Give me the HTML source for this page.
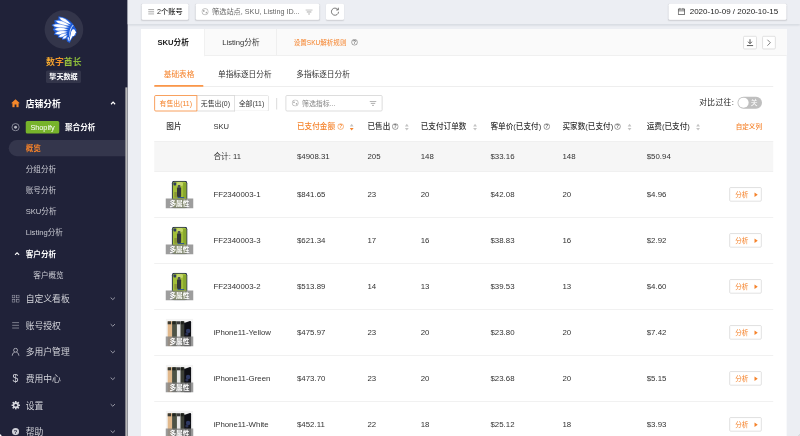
<!DOCTYPE html>
<html lang="zh-CN"><head><meta charset="utf-8"><title>SKU分析</title>
<style>
html,body{margin:0;padding:0}
body{width:800px;height:436px;overflow:hidden;background:#eceef3;font-family:"Liberation Sans","Noto Sans CJK SC",sans-serif;color:#333;-webkit-font-smoothing:antialiased}
#app{position:absolute;left:0;top:0;width:6400px;height:3488px;overflow:hidden;background:#eceef3;transform:scale(0.125);transform-origin:0 0;}
.abs{position:absolute}
/* sidebar */
#side{position:absolute;left:0;top:0;width:1020.8px;height:3488px;background:#202239;overflow:hidden}
#side .thumbbar{z-index:5;position:absolute;left:1003.2px;top:699.2px;width:18.4px;height:2792px;background:#b9b9b9}
#side .logo{position:absolute;left:356.8px;top:81.6px;width:308.8px;height:308.8px;border-radius:50%;background:#33354a}
#side .brand{position:absolute;left:0;width:1020.8px;top:444px;text-align:center;font-size:71.2px;line-height:96px;font-weight:700;letter-spacing:0}
#side .brand .bg{display:inline-block;color:#f08d29;background:linear-gradient(90deg,#f4ad2f 0%,#ef8a28 50%,#9fc83d 50%,#82b539 100%);-webkit-background-clip:text;background-clip:text;-webkit-text-fill-color:transparent}
#side .tag{position:absolute;left:368px;top:563.2px;width:280px;height:100.8px;border-radius:12px;background:#33354a;color:#fff;font-size:56.8px;line-height:100.8px;text-align:center;font-weight:700}
.mi{position:absolute;left:0;width:1000px;height:112px;line-height:112px;color:#d3d4da;font-size:70.4px;white-space:nowrap}
.mi .t{position:absolute;left:205.6px;top:4px}
.mi svg{position:absolute}
.mi.b{font-weight:700;color:#fff}
.si{position:absolute;left:205.6px;height:96px;line-height:96px;padding-top:2.4px;font-size:60.8px;color:#c9cad2;white-space:nowrap}
.pill{position:absolute;left:70px;top:1120px;width:933.6px;height:130.4px;border-radius:66px 0 0 66px;background:#34364c}
.shop{position:absolute;left:206px;top:968px;width:268px;height:100px;border-radius:12.8px;background:#77b32b;color:#fff;font-size:59.2px;line-height:100px;text-align:center;letter-spacing:-0.8px}
/* top bar */
#topbar{position:absolute;left:1020.8px;top:0;width:5379.2px;height:194.4px;background:#eceef3;box-shadow:0 8px 16px rgba(120,125,140,.28)}
.box{position:absolute;background:#fff;border-radius:12px;box-shadow:0 4px 10.4px rgba(0,0,0,.13);font-size:57.6px;line-height:125.6px;color:#333;white-space:nowrap}
/* panel */
#panel{position:absolute;left:1128px;top:232px;width:5164.8px;height:3360px;background:#fff}
#tabhead{position:absolute;left:0;top:0;width:5164.8px;height:212.8px;background:#fafafa;border-bottom:5.6px solid #e8e8e8;box-sizing:border-box}
.tab1{position:absolute;left:0;top:0;width:512px;height:217.6px;background:#fff;border-right:5.6px solid #e8e8e8;box-sizing:border-box}
.tab2{position:absolute;left:512px;top:0;width:576px;height:208px;border-right:5.6px solid #e8e8e8;box-sizing:border-box}
.tt{position:absolute;font-size:61.2px;line-height:96px;padding-top:0.8px;white-space:nowrap;color:#333}
.or{color:#f5822a !important}
.ibtn{position:absolute;width:107.2px;height:105.6px;border:5.6px solid #cfcfcf;border-radius:10.4px;background:#fff;box-sizing:border-box}
.rg{position:absolute;top:760.8px;height:130.4px;box-sizing:border-box;border:6.4px solid #d2d2d2;background:#fff;font-size:55.2px;line-height:121.6px;text-align:center;color:#333;white-space:nowrap}
/* table */
.hd{position:absolute;top:964px;font-size:60.8px;line-height:96px;color:#333;white-space:nowrap}
.hd svg{vertical-align:-8px}
.sumrow{position:absolute;left:1234px;top:1128.8px;width:4952px;height:244.8px;background:#f6f6f6;border-top:4.8px solid #e9e9e9;border-bottom:4.8px solid #e9e9e9;box-sizing:border-box}
.tbl{position:absolute;left:0;top:0;width:6400px;height:3488px;pointer-events:none}
.row{position:absolute;left:1234px;width:4952px;height:368px;border-bottom:5.6px solid #e8e8e8;box-sizing:border-box}
.c{position:absolute;top:131.2px;font-size:62.8px;line-height:96px;color:#333;white-space:nowrap}
.th{position:absolute;left:89.6px;top:70.8px;width:224px;height:224px;overflow:hidden}
.th .art{position:absolute;left:0;top:0}
.th .band{position:absolute;left:0;bottom:0;width:224px;height:80px;background:rgba(130,130,130,.78);color:#fff;font-size:53.6px;line-height:83.2px;text-align:center;font-weight:700}
.btn{position:absolute;left:4600.8px;top:125.2px;width:258.4px;height:113.6px;border:5.6px solid #cfcfcf;border-radius:10.4px;box-sizing:border-box;background:#fff}
.btn .bt{position:absolute;left:41.6px;top:6.4px;font-size:52.8px;line-height:100.8px;color:#f5822a}
.btn .tri{position:absolute;left:196px;top:36px;width:0;height:0;border-left:26.4px solid #f5822a;border-top:18.4px solid transparent;border-bottom:18.4px solid transparent}

.hw{font-weight:500}

</style></head>
<body>
<div id="app">
<div id="side">
<div class="logo"></div>
<svg class="abs" style="left:400px;top:112px" width="232" height="240" viewBox="0 0 29 30">
<path d="M8.4 2.2 L14 3.4 Q21.6 6.4 24.4 12.4 L26.4 15.6 L26.2 17.4 L27 19 L25.8 20 L25.8 21.8 L23.6 22.6 L21.4 25.6 L19.8 29 L17 27.6 L16.4 25 L12 26 L12.2 24 L7.6 23.6 L8.4 21.6 L3.8 20.8 L5 18.2 L2.8 15.6 L4.2 13.6 L1.4 11 L5 9.4 L4 6.4 L8.4 5.6 Z" fill="#1d5bd8"/>
<path d="M21.40 10.60 Q15.06 2.62 9.00 3.20 Q11.37 8.81 21.40 10.60Z" fill="#fff" stroke="#2a66dc" stroke-width=".4"/>
<path d="M20.20 11.80 Q11.65 4.90 5.40 6.80 Q9.22 12.10 20.20 11.80Z" fill="#fff" stroke="#2a66dc" stroke-width=".4"/>
<path d="M19.20 13.40 Q8.80 7.96 2.60 11.00 Q7.69 15.68 19.20 13.40Z" fill="#fff" stroke="#2a66dc" stroke-width=".4"/>
<path d="M18.40 15.40 Q9.08 11.47 4.20 15.20 Q8.97 19.07 18.40 15.40Z" fill="#fff" stroke="#2a66dc" stroke-width=".4"/>
<path d="M17.80 17.40 Q8.60 15.20 4.80 19.60 Q9.84 22.50 17.80 17.40Z" fill="#fff" stroke="#2a66dc" stroke-width=".4"/>
<path d="M17.40 19.20 Q10.38 18.61 8.60 22.80 Q12.80 24.54 17.40 19.20Z" fill="#fff" stroke="#2a66dc" stroke-width=".4"/>
<path d="M17.60 21.00 Q12.68 21.61 12.60 25.00 Q15.92 25.67 17.60 21.00Z" fill="#fff" stroke="#2a66dc" stroke-width=".4"/>
<path d="M22.2 10 Q17.4 15 18.6 23.6" fill="none" stroke="#1d5bd8" stroke-width="1.5"/>
<path d="M23.2 11 Q19 15.6 20 23" fill="none" stroke="#fff" stroke-width=".8"/>
<path d="M24.2 12.2 Q20.4 16 21.2 22.6" fill="none" stroke="#1d5bd8" stroke-width=".9"/>
<path d="M22.4 15.4 Q24.6 14.8 25 16.6 L26.2 18.6 L25.2 19.2 L25.4 20.6 L24.4 20.8 L24.2 22 L22.4 22.2 L21 25 L19.4 27.8 Q19.6 23.6 20.8 20.4 Q21 17 22.4 15.4Z" fill="#fff"/>
<path d="M17.4 23.4 L19.2 23.2 L18.4 27.6 Z" fill="#e6edfc"/>
</svg>
<div class="brand"><span class="bg">数字酋长</span></div>
<div class="tag">擎天数据</div>
<div class="thumbbar"></div>

<!-- 店铺分析 -->
<div class="mi b" style="top:771.2px">
<svg style="left:88px;top:20.8px" width="72" height="68.8" viewBox="0 0 18 17"><path d="M9 0.5 L0.3 8.6 H2.8 V16.6 H7.2 V11 H10.8 V16.6 H15.2 V8.6 H17.7 Z" fill="#f5882a"/></svg>
<span class="t">店铺分析</span>
<svg style="left:883.2px;top:36.8px" width="43.2" height="32" viewBox="0 0 11 8"><path d="M1.2 6.6 L5.5 2.2 L9.8 6.6" fill="none" stroke="#fff" stroke-width="2.5"/></svg>
</div>
<!-- Shopify row -->
<svg class="abs" style="left:90.4px;top:983.2px" width="68.8" height="68.8" viewBox="0 0 16 16"><circle cx="8" cy="8" r="6.8" fill="none" stroke="#b4b5c0" stroke-width="1.25"/><circle cx="8" cy="8" r="2.7" fill="#b4b5c0"/></svg>
<div class="shop">Shopify</div>
<div class="si" style="left:520px;top:969.6px;color:#fff;font-weight:700">聚合分析</div>
<div class="pill"></div>
<div class="si" style="top:1136px;color:#f5822a;font-weight:700">概览</div>
<div class="si" style="top:1308px">分组分析</div>
<div class="si" style="top:1474.4px">账号分析</div>
<div class="si" style="top:1641.6px">SKU分析</div>
<div class="si" style="top:1811.2px">Listing分析</div>
<svg class="abs" style="left:115.2px;top:2014.4px" width="43.2" height="32" viewBox="0 0 11 8"><path d="M1.2 6.4 L5.5 2 L9.8 6.4" fill="none" stroke="#fff" stroke-width="2.2"/></svg>
<div class="si" style="top:1982.4px;color:#fff;font-weight:700">客户分析</div>
<div class="si" style="left:266.4px;top:2150.4px">客户概览</div>

<div class="mi" style="top:2332.8px">
<svg style="left:92.8px;top:24px" width="64" height="64" viewBox="0 0 16 16" fill="none" stroke="#a9aab6" stroke-width="1.2"><rect x="1" y="1" width="5.4" height="5.4"/><rect x="9.6" y="1" width="5.4" height="5.4"/><rect x="1" y="9.6" width="5.4" height="5.4"/><rect x="9.6" y="9.6" width="5.4" height="5.4"/></svg>
<span class="t">自定义看板</span>
<svg style="left:880px;top:40px" width="44.8" height="32" viewBox="0 0 11 8"><path d="M1.2 1.8 L5.5 6 L9.8 1.8" fill="none" stroke="#a9aab6" stroke-width="1.8"/></svg>
</div>
<div class="mi" style="top:2545.6px">
<svg style="left:92.8px;top:27.2px" width="64" height="59.2" viewBox="0 0 16 15" fill="none" stroke="#a3a4b0" stroke-width="1.4"><path d="M1 2 H15 M1 7.5 H15 M1 13 H15"/></svg>
<span class="t">账号授权</span>
<svg style="left:880px;top:40px" width="44.8" height="32" viewBox="0 0 11 8"><path d="M1.2 1.8 L5.5 6 L9.8 1.8" fill="none" stroke="#a9aab6" stroke-width="1.8"/></svg>
</div>
<div class="mi" style="top:2759.2px">
<svg style="left:91.2px;top:20.8px" width="67.2" height="70.4" viewBox="0 0 17 18" fill="none" stroke="#d0d1d8" stroke-width="1.5"><circle cx="8.5" cy="5.6" r="4"/><path d="M1.4 17 Q2 10.6 6.6 9.6 M15.6 17 Q15 10.6 10.4 9.6"/></svg>
<span class="t">多用户管理</span>
<svg style="left:880px;top:40px" width="44.8" height="32" viewBox="0 0 11 8"><path d="M1.2 1.8 L5.5 6 L9.8 1.8" fill="none" stroke="#a9aab6" stroke-width="1.8"/></svg>
</div>
<div class="mi" style="top:2972.8px">
<span style="position:absolute;left:100.8px;top:0;font-size:83.2px;color:#d0d1d8">$</span>
<span class="t">费用中心</span>
<svg style="left:880px;top:40px" width="44.8" height="32" viewBox="0 0 11 8"><path d="M1.2 1.8 L5.5 6 L9.8 1.8" fill="none" stroke="#a9aab6" stroke-width="1.8"/></svg>
</div>
<div class="mi" style="top:3185.6px">
<svg style="left:89.6px;top:20.8px" width="72" height="72" viewBox="0 0 18 18"><g fill="#d6d7de"><circle cx="9" cy="9" r="5.8"/><g><rect x="7.4" y="0.4" width="3.2" height="17.2" rx=".6"/><rect x="7.4" y="0.4" width="3.2" height="17.2" rx=".6" transform="rotate(45 9 9)"/><rect x="7.4" y="0.4" width="3.2" height="17.2" rx=".6" transform="rotate(90 9 9)"/><rect x="7.4" y="0.4" width="3.2" height="17.2" rx=".6" transform="rotate(135 9 9)"/></g></g><circle cx="9" cy="9" r="2.7" fill="#202239"/></svg>
<span class="t">设置</span>
<svg style="left:880px;top:40px" width="44.8" height="32" viewBox="0 0 11 8"><path d="M1.2 1.8 L5.5 6 L9.8 1.8" fill="none" stroke="#a9aab6" stroke-width="1.8"/></svg>
</div>
<div class="mi" style="top:3396.8px">
<svg style="left:93.6px;top:25.6px" width="60.8" height="60.8" viewBox="0 0 17 17"><circle cx="8.5" cy="8.5" r="8" fill="#cfd0d8"/><text x="8.5" y="13" font-size="12.5" font-weight="700" text-anchor="middle" fill="#202239" font-family="Liberation Sans, sans-serif">?</text></svg>
<span class="t">帮助</span>
<svg style="left:880px;top:40px" width="44.8" height="32" viewBox="0 0 11 8"><path d="M1.2 1.8 L5.5 6 L9.8 1.8" fill="none" stroke="#a9aab6" stroke-width="1.8"/></svg>
</div>
<div class="abs" style="left:0;top:3474.4px;width:12px;height:13.6px;background:#fff;border-top-right-radius:12px"></div>
</div>
<div id="topbar"></div>
<!-- top buttons -->
<div class="box" style="left:1134.4px;top:29.6px;width:372.8px;height:127.2px">
<svg class="abs" style="left:50.4px;top:42.4px" width="49.6" height="44.8" viewBox="0 0 12 11"><path d="M0 1.2 H12 M0 5.5 H12 M0 9.8 H12" stroke="#999" stroke-width="1.7" fill="none"/></svg>
<span class="abs" style="left:121.6px;top:0;font-weight:500;color:#2b2b2b">2个账号</span></div>
<div class="box" style="left:1566.4px;top:29.6px;width:987.2px;height:127.2px">
<svg class="abs" style="left:44.8px;top:34.4px" width="59.2" height="59.2" viewBox="0 0 14 14"><circle cx="7" cy="7" r="6" fill="none" stroke="#a6a6a6" stroke-width="1.3"/><path d="M3 4.4 Q6 3 6.4 6 Q4.8 8.2 3.2 6.8 Z M8.4 7.4 Q11.4 6.6 10.8 9.6 Q9 11.2 8 9.4 Z" fill="#a6a6a6"/></svg>
<span class="abs" style="left:129.6px;top:0;color:#666;font-size:57.6px">筛选站点, SKU, Listing ID...</span>
<svg class="abs" style="left:876.8px;top:45.6px" width="59.2" height="41.6" viewBox="0 0 14 10"><path d="M0 1 H14 M2.6 5 H11.4 M5.2 9 H8.8" stroke="#929292" stroke-width="1.5" fill="none"/></svg>
</div>
<div class="box" style="left:2608px;top:29.6px;width:144px;height:127.2px">
<svg class="abs" style="left:35.2px;top:25.6px" width="73.6" height="73.6" viewBox="0 0 18 18"><path d="M14.6 5.2 A7 7 0 1 0 16 9.6" fill="none" stroke="#555" stroke-width="1.5"/><path d="M15.6 1.6 V6 H11.2" fill="none" stroke="#555" stroke-width="1.5"/></svg>
</div>
<div class="box" style="left:5348.8px;top:29.6px;width:942.4px;height:127.2px">
<svg class="abs" style="left:73.6px;top:30.4px" width="59.2" height="60.8" viewBox="0 0 15 15"><rect x="1" y="3" width="13" height="11" fill="none" stroke="#444" stroke-width="1.4"/><path d="M1 6.6 H14 M4.4 0.6 V4 M10.6 0.6 V4" stroke="#444" stroke-width="1.4" fill="none"/></svg>
<span class="abs" style="left:168.8px;top:0;font-size:64px;color:#222">2020-10-09 / 2020-10-15</span>
</div>

<div id="panel">
<div id="tabhead"></div>
<div class="tab1"></div><div class="tab2"></div>
<div class="tt" style="left:131.2px;top:59.2px;font-weight:700;color:#222">SKU分析</div>
<div class="tt" style="left:649.6px;top:59.2px">Listing分析</div>
<div class="tt or" style="left:1221.6px;top:60.8px;font-size:52.4px">设置SKU解析规则</div>
<svg class="abs" style="left:1680.8px;top:79.2px" width="54.4" height="54.4" viewBox="0 0 12 12"><circle cx="6" cy="6" r="5.1" fill="none" stroke="#666" stroke-width="1.05"/><text x="6" y="9.1" font-size="8.4" font-weight="700" text-anchor="middle" fill="#666" font-family="Liberation Sans, sans-serif">?</text></svg>
<div class="ibtn" style="left:4818.4px;top:56px"><svg class="abs" style="left:20.8px;top:17.6px" width="56" height="60.8" viewBox="0 0 14 15"><path d="M7 0.6 V9 M3.2 5.6 L7 9.6 L10.8 5.6 M0.6 13.4 H13.4" fill="none" stroke="#555" stroke-width="2"/></svg></div>
<div class="ibtn" style="left:4969.6px;top:56px"><svg class="abs" style="left:28.8px;top:19.2px" width="40" height="59.2" viewBox="0 0 10 15"><path d="M2 1.4 L8 7.5 L2 13.6" fill="none" stroke="#555" stroke-width="1.5"/></svg></div>

<!-- sub tabs -->
<div class="tt or" style="left:182px;top:314.4px">基础表格</div>
<div class="tt" style="left:616px;top:314.4px">单指标逐日分析</div>
<div class="tt" style="left:1242px;top:314.4px">多指标逐日分析</div>
<div class="abs" style="left:106px;top:456.8px;width:4952px;height:5.6px;background:#e4e4e4"></div>
<div class="abs" style="left:105.6px;top:448.4px;width:393.6px;height:13.6px;border-radius:4.8px;background:#fb9648"></div>
</div>

<!-- radio group -->
<div class="rg" style="left:1572.8px;width:306.4px;border-left:none">无售出(0)</div>
<div class="rg" style="left:1879.2px;width:271.2px;border-left:none;border-radius:0 12px 12px 0">全部(11)</div>
<div class="rg or" style="left:1234px;width:344px;border-color:#f5822a;border-radius:12px 0 0 12px;color:#f5822a">有售出(11)</div>
<div class="abs" style="left:2211.2px;top:784px;width:5.6px;height:92px;background:#d0d0d0"></div>
<div class="rg" style="left:2284px;width:776px;border-radius:12px;text-align:left">
<svg class="abs" style="left:43.2px;top:28px" width="57.6" height="57.6" viewBox="0 0 14 14"><circle cx="7" cy="7" r="6" fill="none" stroke="#a6a6a6" stroke-width="1.3"/><path d="M3 4.4 Q6 3 6.4 6 Q4.8 8.2 3.2 6.8 Z M8.4 7.4 Q11.4 6.6 10.8 9.6 Q9 11.2 8 9.4 Z" fill="#a6a6a6"/></svg>
<span class="abs" style="left:126.4px;top:0;color:#858585">筛选指标...</span>
<svg class="abs" style="left:665.6px;top:40px" width="56" height="40" viewBox="0 0 14 10"><path d="M0 1 H14 M2.6 5 H11.4 M5.2 9 H8.8" stroke="#929292" stroke-width="1.5" fill="none"/></svg>
</div>
<div class="tt" style="left:5594px;top:770.4px;color:#222;letter-spacing:3.6px">对比过往:</div>
<div class="abs" style="left:5900px;top:773.6px;width:196px;height:96px;border-radius:48px;background:#bfbfbf">
<div class="abs" style="left:7.2px;top:7.2px;width:81.6px;height:81.6px;border-radius:50%;background:#fff"></div>
<span class="abs" style="left:105.6px;top:0;font-size:54.4px;line-height:96px;color:#fff">关</span></div>

<!-- header -->
<div class="hd hw" style="left:1330.4px">图片</div>
<div class="hd hw" style="left:1707.2px">SKU</div>
<div class="hd hw or" style="left:2376px">已支付金额</div>
<div class="hd hw" style="left:2940px">已售出</div>
<div class="hd hw" style="left:3366px">已支付订单数</div>
<div class="hd hw" style="left:3924px">客单价(已支付)</div>
<div class="hd hw" style="left:4500px">买家数(已支付)</div>
<div class="hd hw" style="left:5174px">运费(已支付)</div>
<div class="hd hw or" style="left:5886px;font-size:52.4px">自定义列</div>
<svg class="abs" style="left:2697.6px;top:984.8px" width="54.4" height="54.4" viewBox="0 0 12 12"><circle cx="6" cy="6" r="5.1" fill="none" stroke="#f5822a" stroke-width="1.05"/><text x="6" y="9.1" font-size="8.4" font-weight="700" text-anchor="middle" fill="#f5822a" font-family="Liberation Sans, sans-serif">?</text></svg>
<svg class="abs" style="left:2795.2px;top:988px" width="36.8" height="59.2" viewBox="0 0 9 15"><path d="M4.5 0.6 L8.4 6 H0.6 Z" fill="#c4c4c4"/><path d="M4.5 14.4 L8.4 9 H0.6 Z" fill="#f5822a"/></svg>
<svg class="abs" style="left:3134.8px;top:984.8px" width="54.4" height="54.4" viewBox="0 0 12 12"><circle cx="6" cy="6" r="5.1" fill="none" stroke="#595959" stroke-width="1.05"/><text x="6" y="9.1" font-size="8.4" font-weight="700" text-anchor="middle" fill="#595959" font-family="Liberation Sans, sans-serif">?</text></svg>
<svg class="abs" style="left:3235.6px;top:988px" width="36.8" height="59.2" viewBox="0 0 9 15"><path d="M4.5 0.6 L8.4 6 H0.6 Z" fill="#c4c4c4"/><path d="M4.5 14.4 L8.4 9 H0.6 Z" fill="#c4c4c4"/></svg>
<svg class="abs" style="left:3781.6px;top:988px" width="36.8" height="59.2" viewBox="0 0 9 15"><path d="M4.5 0.6 L8.4 6 H0.6 Z" fill="#c4c4c4"/><path d="M4.5 14.4 L8.4 9 H0.6 Z" fill="#c4c4c4"/></svg>
<svg class="abs" style="left:4346.8px;top:984.8px" width="54.4" height="54.4" viewBox="0 0 12 12"><circle cx="6" cy="6" r="5.1" fill="none" stroke="#595959" stroke-width="1.05"/><text x="6" y="9.1" font-size="8.4" font-weight="700" text-anchor="middle" fill="#595959" font-family="Liberation Sans, sans-serif">?</text></svg>
<svg class="abs" style="left:4912.8px;top:984.8px" width="54.4" height="54.4" viewBox="0 0 12 12"><circle cx="6" cy="6" r="5.1" fill="none" stroke="#595959" stroke-width="1.05"/><text x="6" y="9.1" font-size="8.4" font-weight="700" text-anchor="middle" fill="#595959" font-family="Liberation Sans, sans-serif">?</text></svg>
<svg class="abs" style="left:5017.6px;top:988px" width="36.8" height="59.2" viewBox="0 0 9 15"><path d="M4.5 0.6 L8.4 6 H0.6 Z" fill="#c4c4c4"/><path d="M4.5 14.4 L8.4 9 H0.6 Z" fill="#c4c4c4"/></svg>
<svg class="abs" style="left:5565.6px;top:988px" width="36.8" height="59.2" viewBox="0 0 9 15"><path d="M4.5 0.6 L8.4 6 H0.6 Z" fill="#c4c4c4"/><path d="M4.5 14.4 L8.4 9 H0.6 Z" fill="#c4c4c4"/></svg>
<div class="sumrow"></div>
<div class="hd" style="left:1707.2px;top:1204px;font-size:61.2px">合计: 11</div>
<div class="hd" style="left:2376px;top:1204px;font-size:62.8px">$4908.31</div>
<div class="hd" style="left:2940px;top:1204px;font-size:62.8px">205</div>
<div class="hd" style="left:3366px;top:1204px;font-size:62.8px">148</div>
<div class="hd" style="left:3924px;top:1204px;font-size:62.8px">$33.16</div>
<div class="hd" style="left:4500px;top:1204px;font-size:62.8px">148</div>
<div class="hd" style="left:5174px;top:1204px;font-size:62.8px">$50.94</div>
<div class="tbl">
<div class="row" style="top:1373.2px"><div class="th"><svg class="art" viewBox="0 0 28 28" width="224" height="224">
<rect x="6.4" y="0.3" width="15.4" height="27.5" rx="2.4" fill="#28324f"/>
<rect x="7.3" y="1.2" width="13.6" height="25.7" rx="1.7" fill="#a3c038"/>
<rect x="11" y="1.4" width="6.4" height="4.2" rx="1.6" fill="#c4d768"/>
<rect x="17.6" y="2.6" width="3" height="15" fill="#88a82d"/>
<rect x="8" y="2" width="2.7" height="3.1" rx=".8" fill="#2f3c5c"/>
<rect x="11.5" y="6.6" width="4.1" height="10.2" rx="1.5" fill="#33373a"/>
<rect x="12.3" y="4.6" width="2.5" height="3" rx=".5" fill="#4b5153"/>
<rect x="8.8" y="11.5" width="2.6" height="5.6" fill="#8a9636"/>
<rect x="12" y="16.6" width="6.6" height="1.2" fill="#2b4f9a"/>
<rect x="7.3" y="17.8" width="13.6" height="9.1" fill="#93b132"/>
<rect x="9" y="19.4" width="3" height="6" fill="#b7cf52"/>
<rect x="15" y="19" width="4" height="6.4" fill="#7f9d2a"/>
</svg><div class="band">多属性</div></div><span class="c" style="left:473.2px">FF2340003-1</span><span class="c" style="left:1142px">$841.65</span><span class="c" style="left:1706px">23</span><span class="c" style="left:2132px">20</span><span class="c" style="left:2690px">$42.08</span><span class="c" style="left:3266px">20</span><span class="c" style="left:3940px">$4.96</span><span class="btn"><span class="bt">分析</span><i class="tri"></i></span></div>
<div class="row" style="top:1741.2px"><div class="th"><svg class="art" viewBox="0 0 28 28" width="224" height="224">
<rect x="6.4" y="0.3" width="15.4" height="27.5" rx="2.4" fill="#28324f"/>
<rect x="7.3" y="1.2" width="13.6" height="25.7" rx="1.7" fill="#a3c038"/>
<rect x="11" y="1.4" width="6.4" height="4.2" rx="1.6" fill="#c4d768"/>
<rect x="17.6" y="2.6" width="3" height="15" fill="#88a82d"/>
<rect x="8" y="2" width="2.7" height="3.1" rx=".8" fill="#2f3c5c"/>
<rect x="11.5" y="6.6" width="4.1" height="10.2" rx="1.5" fill="#33373a"/>
<rect x="12.3" y="4.6" width="2.5" height="3" rx=".5" fill="#4b5153"/>
<rect x="8.8" y="11.5" width="2.6" height="5.6" fill="#8a9636"/>
<rect x="12" y="16.6" width="6.6" height="1.2" fill="#2b4f9a"/>
<rect x="7.3" y="17.8" width="13.6" height="9.1" fill="#93b132"/>
<rect x="9" y="19.4" width="3" height="6" fill="#b7cf52"/>
<rect x="15" y="19" width="4" height="6.4" fill="#7f9d2a"/>
</svg><div class="band">多属性</div></div><span class="c" style="left:473.2px">FF2340003-3</span><span class="c" style="left:1142px">$621.34</span><span class="c" style="left:1706px">17</span><span class="c" style="left:2132px">16</span><span class="c" style="left:2690px">$38.83</span><span class="c" style="left:3266px">16</span><span class="c" style="left:3940px">$2.92</span><span class="btn"><span class="bt">分析</span><i class="tri"></i></span></div>
<div class="row" style="top:2109.2px"><div class="th"><svg class="art" viewBox="0 0 28 28" width="224" height="224">
<rect x="6.4" y="0.3" width="15.4" height="27.5" rx="2.4" fill="#28324f"/>
<rect x="7.3" y="1.2" width="13.6" height="25.7" rx="1.7" fill="#a3c038"/>
<rect x="11" y="1.4" width="6.4" height="4.2" rx="1.6" fill="#c4d768"/>
<rect x="17.6" y="2.6" width="3" height="15" fill="#88a82d"/>
<rect x="8" y="2" width="2.7" height="3.1" rx=".8" fill="#2f3c5c"/>
<rect x="11.5" y="6.6" width="4.1" height="10.2" rx="1.5" fill="#33373a"/>
<rect x="12.3" y="4.6" width="2.5" height="3" rx=".5" fill="#4b5153"/>
<rect x="8.8" y="11.5" width="2.6" height="5.6" fill="#8a9636"/>
<rect x="12" y="16.6" width="6.6" height="1.2" fill="#2b4f9a"/>
<rect x="7.3" y="17.8" width="13.6" height="9.1" fill="#93b132"/>
<rect x="9" y="19.4" width="3" height="6" fill="#b7cf52"/>
<rect x="15" y="19" width="4" height="6.4" fill="#7f9d2a"/>
</svg><div class="band">多属性</div></div><span class="c" style="left:473.2px">FF2340003-2</span><span class="c" style="left:1142px">$513.89</span><span class="c" style="left:1706px">14</span><span class="c" style="left:2132px">13</span><span class="c" style="left:2690px">$39.53</span><span class="c" style="left:3266px">13</span><span class="c" style="left:3940px">$4.60</span><span class="btn"><span class="bt">分析</span><i class="tri"></i></span></div>
<div class="row" style="top:2477.2px"><div class="th"><svg class="art" viewBox="0 0 28 28" width="224" height="224">
<rect x="0" y="0" width="28" height="28" fill="#f4f4f4"/>
<rect x="2.2" y="2.8" width="5" height="25" rx=".8" fill="#e2b98c"/>
<rect x="2.2" y="2.8" width="3.4" height="3" fill="#3a3a32"/>
<rect x="6.6" y="2.8" width="5.2" height="25" rx=".8" fill="#4d5245"/>
<rect x="6.8" y="2.8" width="3.4" height="3" fill="#22251f"/>
<rect x="11.4" y="2.8" width="4.2" height="25" rx=".8" fill="#e9e9e9"/>
<rect x="11.4" y="2.8" width="3.2" height="3" fill="#3a3a3a"/>
<rect x="15" y="2.8" width="4" height="25" rx=".8" fill="#3d4037"/>
<rect x="15.2" y="2.8" width="3" height="3" fill="#1c1e1a"/>
<path d="M18.6 4.4 L24.4 2.6 Q25.6 2.4 25.6 3.6 L25.6 28 L18.6 28 Z" fill="#0e0f14"/>
<circle cx="22.6" cy="12.5" r="2.2" fill="#2f3a63"/>
<circle cx="21.4" cy="15.5" r="1.6" fill="#2a3152"/>
</svg><div class="band">多属性</div></div><span class="c" style="left:473.2px">iPhone11-Yellow</span><span class="c" style="left:1142px">$475.97</span><span class="c" style="left:1706px">23</span><span class="c" style="left:2132px">20</span><span class="c" style="left:2690px">$23.80</span><span class="c" style="left:3266px">20</span><span class="c" style="left:3940px">$7.42</span><span class="btn"><span class="bt">分析</span><i class="tri"></i></span></div>
<div class="row" style="top:2845.2px"><div class="th"><svg class="art" viewBox="0 0 28 28" width="224" height="224">
<rect x="0" y="0" width="28" height="28" fill="#f4f4f4"/>
<rect x="2.2" y="2.8" width="5" height="25" rx=".8" fill="#e2b98c"/>
<rect x="2.2" y="2.8" width="3.4" height="3" fill="#3a3a32"/>
<rect x="6.6" y="2.8" width="5.2" height="25" rx=".8" fill="#4d5245"/>
<rect x="6.8" y="2.8" width="3.4" height="3" fill="#22251f"/>
<rect x="11.4" y="2.8" width="4.2" height="25" rx=".8" fill="#e9e9e9"/>
<rect x="11.4" y="2.8" width="3.2" height="3" fill="#3a3a3a"/>
<rect x="15" y="2.8" width="4" height="25" rx=".8" fill="#3d4037"/>
<rect x="15.2" y="2.8" width="3" height="3" fill="#1c1e1a"/>
<path d="M18.6 4.4 L24.4 2.6 Q25.6 2.4 25.6 3.6 L25.6 28 L18.6 28 Z" fill="#0e0f14"/>
<circle cx="22.6" cy="12.5" r="2.2" fill="#2f3a63"/>
<circle cx="21.4" cy="15.5" r="1.6" fill="#2a3152"/>
</svg><div class="band">多属性</div></div><span class="c" style="left:473.2px">iPhone11-Green</span><span class="c" style="left:1142px">$473.70</span><span class="c" style="left:1706px">23</span><span class="c" style="left:2132px">20</span><span class="c" style="left:2690px">$23.68</span><span class="c" style="left:3266px">20</span><span class="c" style="left:3940px">$5.15</span><span class="btn"><span class="bt">分析</span><i class="tri"></i></span></div>
<div class="row" style="top:3213.2px"><div class="th"><svg class="art" viewBox="0 0 28 28" width="224" height="224">
<rect x="0" y="0" width="28" height="28" fill="#f4f4f4"/>
<rect x="2.2" y="2.8" width="5" height="25" rx=".8" fill="#e2b98c"/>
<rect x="2.2" y="2.8" width="3.4" height="3" fill="#3a3a32"/>
<rect x="6.6" y="2.8" width="5.2" height="25" rx=".8" fill="#4d5245"/>
<rect x="6.8" y="2.8" width="3.4" height="3" fill="#22251f"/>
<rect x="11.4" y="2.8" width="4.2" height="25" rx=".8" fill="#e9e9e9"/>
<rect x="11.4" y="2.8" width="3.2" height="3" fill="#3a3a3a"/>
<rect x="15" y="2.8" width="4" height="25" rx=".8" fill="#3d4037"/>
<rect x="15.2" y="2.8" width="3" height="3" fill="#1c1e1a"/>
<path d="M18.6 4.4 L24.4 2.6 Q25.6 2.4 25.6 3.6 L25.6 28 L18.6 28 Z" fill="#0e0f14"/>
<circle cx="22.6" cy="12.5" r="2.2" fill="#2f3a63"/>
<circle cx="21.4" cy="15.5" r="1.6" fill="#2a3152"/>
</svg><div class="band">多属性</div></div><span class="c" style="left:473.2px">iPhone11-White</span><span class="c" style="left:1142px">$452.11</span><span class="c" style="left:1706px">22</span><span class="c" style="left:2132px">18</span><span class="c" style="left:2690px">$25.12</span><span class="c" style="left:3266px">18</span><span class="c" style="left:3940px">$3.93</span><span class="btn"><span class="bt">分析</span><i class="tri"></i></span></div>
</div>
<svg class="abs" style="left:6379.2px;top:3467.2px" width="20.8" height="20.8" viewBox="0 0 26 26"><path d="M26 6 A20 20 0 0 1 6 26 L26 26 Z" fill="#fff"/><path d="M26 6 A20 20 0 0 1 6 26" fill="none" stroke="#b5b5b5" stroke-width="5"/></svg>
</div>
</body></html>
